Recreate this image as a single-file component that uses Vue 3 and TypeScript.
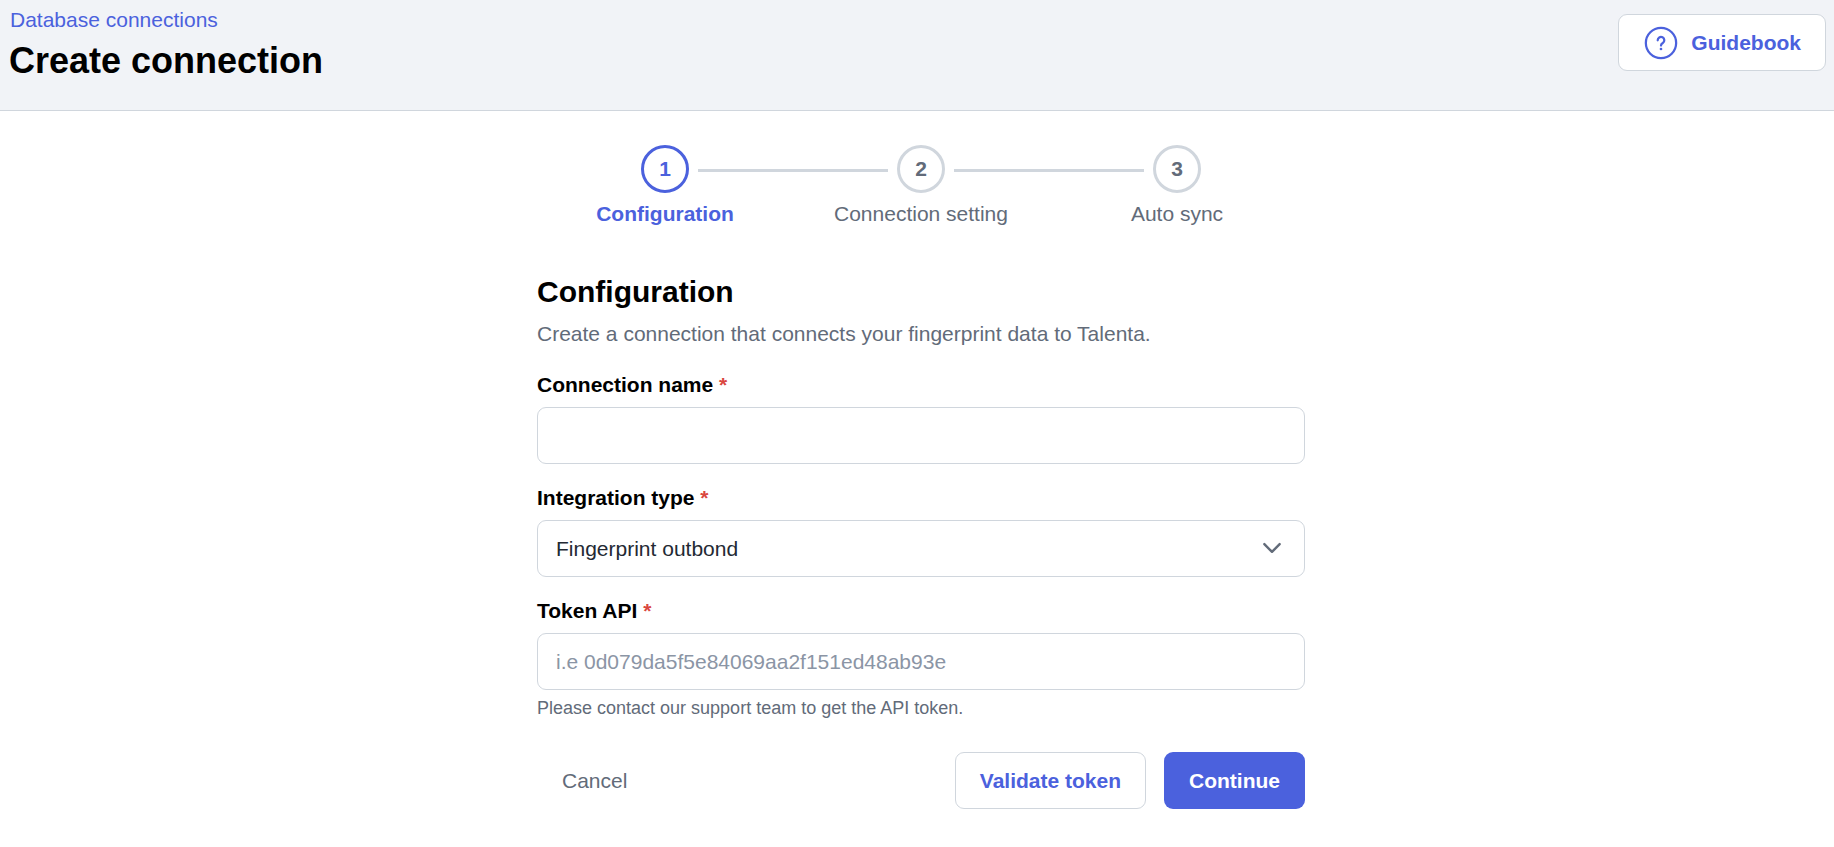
<script setup lang="ts">
import { ref } from 'vue'

interface Step {
  number: number
  label: string
}

const steps: Step[] = [
  { number: 1, label: 'Configuration' },
  { number: 2, label: 'Connection setting' },
  { number: 3, label: 'Auto sync' },
]

const currentStep = ref(1)
const connectionName = ref('')
const integrationType = ref('Fingerprint outbond')
const token = ref('')
</script>

<template>
  <div class="page">
    <header class="header">
      <div class="heading">
        <a class="breadcrumb" href="#">Database connections</a>
        <h1 class="title">Create connection</h1>
      </div>
      <button class="button secondary guidebook" type="button">
        <svg class="icon" viewBox="0 0 24 24" fill="none" stroke="currentColor" aria-hidden="true">
          <circle cx="12" cy="12" r="10.1" stroke-width="1.5" />
          <path
            d="M9.8 10.2a2.2 2.2 0 1 1 3.4 1.8c-.8.5-1.2.9-1.2 1.7"
            stroke-width="1.5"
            stroke-linecap="round"
          />
          <circle cx="12" cy="16" r="0.9" fill="currentColor" stroke="none" />
        </svg>
        Guidebook
      </button>
    </header>

    <main class="main">
      <div class="content">
        <ol class="stepper">
          <li
            v-for="(step, index) in steps"
            :key="step.number"
            class="step"
            :class="{ active: step.number === currentStep }"
          >
            <span class="line before" :class="{ hidden: index === 0 }"></span>
            <span class="circle">{{ step.number }}</span>
            <span class="line after" :class="{ hidden: index === steps.length - 1 }"></span>
            <span class="step-label">{{ step.label }}</span>
          </li>
        </ol>

        <form @submit.prevent>
          <h2 class="section-title">Configuration</h2>
          <p class="description">Create a connection that connects your fingerprint data to Talenta.</p>

          <div class="field">
            <label class="label" for="connection-name">Connection name <span class="required">*</span></label>
            <input id="connection-name" v-model="connectionName" class="control" type="text" />
          </div>

          <div class="field">
            <label class="label" for="integration-type">Integration type <span class="required">*</span></label>
            <div class="select-wrap">
              <select id="integration-type" v-model="integrationType" class="control">
                <option>Fingerprint outbond</option>
              </select>
              <svg class="icon chevron" viewBox="0 0 24 24" fill="none" stroke="currentColor" aria-hidden="true">
                <path d="M6.9 8.7 12 13.9l5.1-5.2" stroke-width="1.6" stroke-linecap="round" stroke-linejoin="round" />
              </svg>
            </div>
          </div>

          <div class="field">
            <label class="label" for="token">Token API <span class="required">*</span></label>
            <input
              id="token"
              v-model="token"
              class="control"
              type="text"
              placeholder="i.e 0d079da5f5e84069aa2f151ed48ab93e"
              aria-describedby="token-help"
            />
            <p id="token-help" class="help">Please contact our support team to get the API token.</p>
          </div>

          <div class="actions">
            <button class="button ghost" type="button">Cancel</button>
            <div class="actions-end">
              <button class="button secondary" type="button">Validate token</button>
              <button class="button primary" type="submit">Continue</button>
            </div>
          </div>
        </form>
      </div>
    </main>
  </div>
</template>

<style>
body {
  margin: 0;
  background: #fff;
}
</style>

<style scoped>
.page {
  font-family: 'Liberation Sans', Arial, sans-serif;
  font-size: 21px;
  line-height: 30px;
  color: #000;
}

.page *,
.page {
  box-sizing: border-box;
}

.header {
  display: flex;
  justify-content: space-between;
  align-items: flex-start;
  padding: 5px 8px 25px 9px;
  background: #f1f3f7;
  border-bottom: 1px solid #d0d6dd;
}

.heading {
  display: flex;
  flex-direction: column;
  gap: 2px;
}

.breadcrumb {
  padding-left: 1px;
  color: #4b61dd;
  text-decoration: none;
}

.title {
  margin: 0;
  font-size: 36px;
  line-height: 48px;
}

.button {
  display: inline-flex;
  align-items: center;
  justify-content: center;
  gap: 12px;
  height: 57px;
  padding: 0 24px;
  border: 1px solid transparent;
  border-radius: 9px;
  background: transparent;
  font: inherit;
  font-weight: 700;
  cursor: pointer;
}

.secondary {
  background: #fff;
  border-color: #d0d6dd;
  color: #4b61dd;
}

.primary {
  background: #4b61dd;
  color: #fff;
}

.ghost {
  color: #626b79;
  font-weight: 400;
}

.guidebook {
  margin-top: 9px;
}

.icon {
  flex: none;
  width: 36px;
  height: 36px;
}

.main {
  padding: 34px 0 38px 8px;
}

.content {
  max-width: 768px;
  margin: 0 auto;
}

.stepper {
  display: grid;
  grid-template-columns: repeat(3, 1fr);
  margin: 0 0 42px;
  padding: 0;
  list-style: none;
}

.step {
  display: grid;
  grid-template-columns: 1fr 48px 1fr;
  align-items: center;
  row-gap: 6px;
  color: #626b79;
}

.circle {
  display: flex;
  align-items: center;
  justify-content: center;
  height: 48px;
  border: 3px solid #d0d6dd;
  border-radius: 50%;
  font-weight: 700;
}

.line {
  height: 3px;
  margin-top: 3px;
  background: #d0d6dd;
}

.before {
  margin-right: 9px;
}

.after {
  margin-left: 9px;
}

.hidden {
  visibility: hidden;
}

.step-label {
  grid-column: 1 / -1;
  text-align: center;
}

.active {
  color: #4b61dd;
}

.active .circle {
  border-color: #4b61dd;
}

.active .step-label {
  font-weight: 700;
}

.section-title {
  margin: 0;
  font-size: 30px;
  line-height: 42px;
}

.description {
  margin: 6px 0 21px;
  color: #626b79;
}

.field {
  margin-bottom: 19px;
}

.label {
  display: block;
  margin-bottom: 7px;
  font-weight: 700;
}

.required {
  color: #da473f;
}

.control {
  display: block;
  width: 100%;
  height: 57px;
  padding: 0 18px;
  border: 1px solid #d0d6dd;
  border-radius: 9px;
  background: #fff;
  color: #232933;
  font: inherit;
  appearance: none;
}

.control::placeholder {
  color: #8b95a5;
  opacity: 1;
}

.select-wrap {
  position: relative;
}

.chevron {
  position: absolute;
  top: 11px;
  right: 15px;
  color: #626b79;
  pointer-events: none;
}

.help {
  margin: 6px 0 0;
  color: #626b79;
  font-size: 18px;
  line-height: 24px;
}

.actions {
  display: flex;
  justify-content: space-between;
  margin-top: 32px;
}

.actions-end {
  display: flex;
  gap: 18px;
}
</style>
